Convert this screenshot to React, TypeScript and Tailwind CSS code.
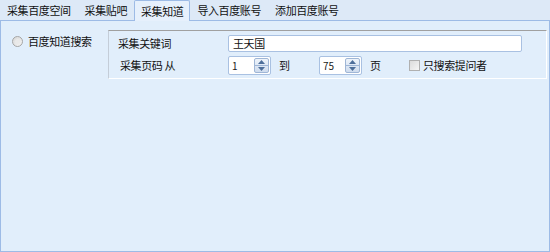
import React from "react"

const tabs = ["采集百度空间", "采集贴吧", "采集知道", "导入百度账号", "添加百度账号"]

function Spinner({ value }: { value: string }) {
  return (
    <div className="flex h-[19px] w-[43px] items-center rounded-[2px] border border-[#a9c1e2] bg-white">
      <span className="flex-1 pl-[3px] text-[10px] leading-none tracking-normal text-[#1a1a1a]">{value}</span>
      <div className="mr-[1px] flex h-[15px] w-[15px] flex-col overflow-hidden rounded-[2px] border border-[#9fb6d6] bg-gradient-to-b from-[#eef4fb] to-[#cfdcee]">
        <div className="flex flex-1 items-center justify-center border-b border-[#9fb6d6]">
          <svg width="7" height="4" viewBox="0 0 7 4">
            <path d="M0 4 L3.5 0 L7 4 Z" fill="#4d6e9a" />
          </svg>
        </div>
        <div className="flex flex-1 items-center justify-center">
          <svg width="7" height="4" viewBox="0 0 7 4">
            <path d="M0 0 L3.5 4 L7 0 Z" fill="#4d6e9a" />
          </svg>
        </div>
      </div>
    </div>
  )
}

export default function App() {
  return (
    <div
      className="flex h-[252px] w-[550px] flex-col bg-[#dde9f7] text-[11px] tracking-[-0.4px] text-[#111]"
      style={{ fontFamily: '"Noto Sans CJK SC", "Noto Sans", sans-serif' }}
    >
      {/* Tabs */}
      <div className="flex h-[20px] items-end">
        {tabs.map((t) => {
          const active = t === "采集知道"
          return (
            <div
              key={t}
              className={
                active
                  ? "relative z-10 -mb-px flex h-[21px] items-center rounded-t-[2px] border border-b-0 border-[#9dbbe6] bg-[#e6f0fc] px-[6px] leading-none"
                  : "flex h-[19px] items-center px-[7px] leading-none"
              }
            >
              {t}
            </div>
          )
        })}
      </div>

      {/* Panel */}
      <div className="flex flex-1 items-start border border-[#9dbbe6] bg-[#e1eefb] pr-[2px]">
        <div className="flex w-[107px] items-center gap-[5px] pl-[11px] pt-[15px]">
          <span className="flex h-[11px] w-[11px] items-center justify-center rounded-full border border-[#a5a5a5] bg-gradient-to-br from-[#d9d9d9] to-[#f4f4f4]">
            <span className="h-[5px] w-[5px] rounded-full bg-[#e9e9e9]" />
          </span>
          <span className="leading-none">百度知道搜索</span>
        </div>

        <div className="mt-[9px] flex-1 border-t border-l border-t-[#a0a0a0] border-l-[#c4cdd8] border-b border-b-white border-r border-r-white pl-[9px] pr-[24px] pt-[4px] pb-[3px]">
          <div className="flex h-[17px] items-center">
            <span className="w-[110px] leading-none">采集关键词</span>
            <div className="flex h-[17px] flex-1 items-center rounded-[2px] border border-[#a9c1e2] bg-white pl-[4px] leading-none">
              王天国
            </div>
          </div>
          <div className="mt-[4px] flex h-[19px] items-center">
            <span className="w-[110px] pl-[2px] leading-none">采集页码 从</span>
            <Spinner value="1" />
            <span className="ml-[8px] w-[40px] leading-none">到</span>
            <Spinner value="75" />
            <span className="ml-[8px] w-[39px] leading-none">页</span>
            <span className="h-[11px] w-[11px] border border-[#b0b0b0] bg-gradient-to-br from-[#dcdcdc] to-[#f6f6f6]" />
            <span className="ml-[3px] leading-none">只搜索提问者</span>
          </div>
        </div>
      </div>
    </div>
  )
}
